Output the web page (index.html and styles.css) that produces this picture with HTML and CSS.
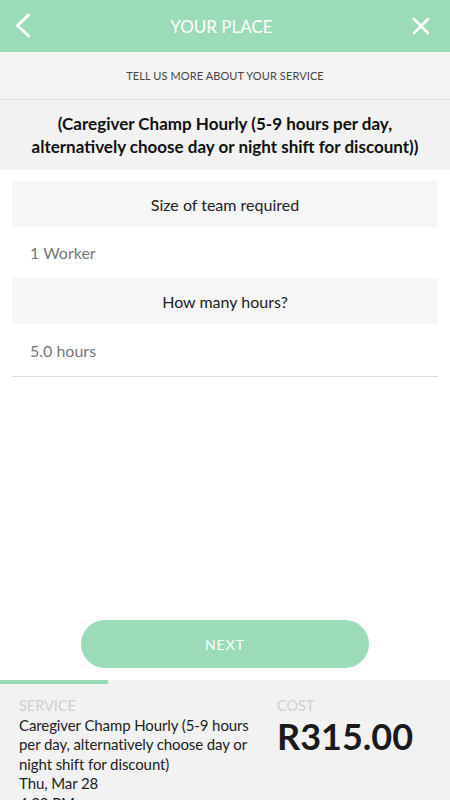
FILE: index.html
```html
<!DOCTYPE html>
<html lang="en">
<head>
    <meta charset="UTF-8">
    <meta name="viewport" content="width=device-width, initial-scale=1.0">
    <title>Your Place</title>
    <link rel="stylesheet" href="styles.css">
</head>
<body>
    <div class="screen">
        <div class="topbar">
            <button class="icon-btn" aria-label="Back">
                <svg width="16" height="26" viewBox="0 0 16 26">
                    <polyline points="13.5,2 2.5,12.5 13.5,23" fill="none" stroke="#fff" stroke-width="3" stroke-linecap="round" stroke-linejoin="round"/>
                </svg>
            </button>
            <h1 class="topbar-title">YOUR PLACE</h1>
            <button class="icon-btn" aria-label="Close">
                <svg width="18" height="18" viewBox="0 0 18 18">
                    <path d="M2 2 L16 16 M16 2 L2 16" fill="none" stroke="#fff" stroke-width="2.6" stroke-linecap="round"/>
                </svg>
            </button>
        </div>

        <div class="subheader">TELL US MORE ABOUT YOUR SERVICE</div>

        <div class="service-title">(Caregiver Champ Hourly (5-9 hours per day, alternatively choose day or night shift for discount))</div>

        <div class="form">
            <div class="question">Size of team required</div>
            <div class="answer">1 Worker</div>
            <div class="question">How many hours?</div>
            <div class="answer last">5.0 hours</div>
        </div>

        <div class="actions">
            <button class="next-btn">NEXT</button>
        </div>

        <div class="summary">
            <div class="progress"></div>
            <div class="summary-body">
                <div class="summary-service">
                    <div class="summary-label">SERVICE</div>
                    <div class="summary-text">Caregiver Champ Hourly (5-9 hours per day, alternatively choose day or night shift for discount)</div>
                    <div class="summary-text">Thu, Mar 28</div>
                    <div class="summary-text">4:22 PM</div>
                </div>
                <div class="summary-cost">
                    <div class="summary-label">COST</div>
                    <div class="cost-value">R315.00</div>
                </div>
            </div>
        </div>
    </div>
</body>
</html>
```

FILE: styles.css
```css
* {
    box-sizing: border-box;
}

body {
    margin: 0;
    font-family: 'Lato', 'Open Sans', sans-serif;
    background-color: #ffffff;
}

.screen {
    width: 450px;
    height: 800px;
    display: flex;
    flex-direction: column;
    overflow: hidden;
}

.topbar {
    height: 52px;
    background-color: #9bdbb8;
    display: flex;
    align-items: center;
    justify-content: space-between;
    padding: 0 20px 0 15px;
    flex-shrink: 0;
}

.icon-btn {
    background: none;
    border: none;
    padding: 0;
    display: flex;
    align-items: center;
    cursor: pointer;
}

.topbar-title {
    margin: 0;
    font-size: 17px;
    font-weight: 400;
    color: #ffffff;
}

.subheader {
    height: 48px;
    background-color: #f3f3f3;
    border-bottom: 1px solid #e2e2e2;
    display: flex;
    align-items: center;
    justify-content: center;
    font-size: 11px;
    color: #444;
    letter-spacing: 0.1px;
    flex-shrink: 0;
}

.service-title {
    height: 70px;
    background-color: #f2f2f2;
    display: flex;
    align-items: center;
    justify-content: center;
    text-align: center;
    padding: 0 20px;
    font-size: 17px;
    font-weight: 700;
    line-height: 23px;
    color: #111;
    flex-shrink: 0;
}

.form {
    padding: 11px 12px 0;
    flex: 1;
}

.question {
    height: 46px;
    background-color: #f6f6f6;
    display: flex;
    align-items: center;
    justify-content: center;
    font-size: 16px;
    color: #222;
}

.answer {
    height: 51px;
    display: flex;
    align-items: center;
    padding: 0 18px;
    font-size: 16px;
    color: #777;
}

.answer.last {
    height: 53px;
    border-bottom: 1px solid #dcdcdc;
}

.actions {
    display: flex;
    justify-content: center;
    padding-bottom: 12px;
    flex-shrink: 0;
}

.next-btn {
    width: 288px;
    height: 48px;
    border: none;
    border-radius: 24px;
    background-color: #9bdbb8;
    color: #ffffff;
    font-family: inherit;
    font-size: 14px;
    letter-spacing: 1px;
    cursor: pointer;
}

.summary {
    height: 120px;
    background-color: #f2f2f2;
    flex-shrink: 0;
    overflow: hidden;
}

.progress {
    width: 108px;
    height: 4px;
    background-color: #9bdbb8;
}

.summary-body {
    display: flex;
    gap: 18px;
    padding: 12px 19px 0;
}

.summary-service {
    width: 240px;
}

.summary-label {
    font-size: 14.5px;
    line-height: 19.5px;
    color: #cfcfcf;
}

.summary-text {
    font-size: 15px;
    letter-spacing: -0.1px;
    line-height: 19.5px;
    color: #222;
}

.cost-value {
    font-size: 36px;
    font-weight: 700;
    line-height: 40px;
    color: #1a1a1a;
}
```
